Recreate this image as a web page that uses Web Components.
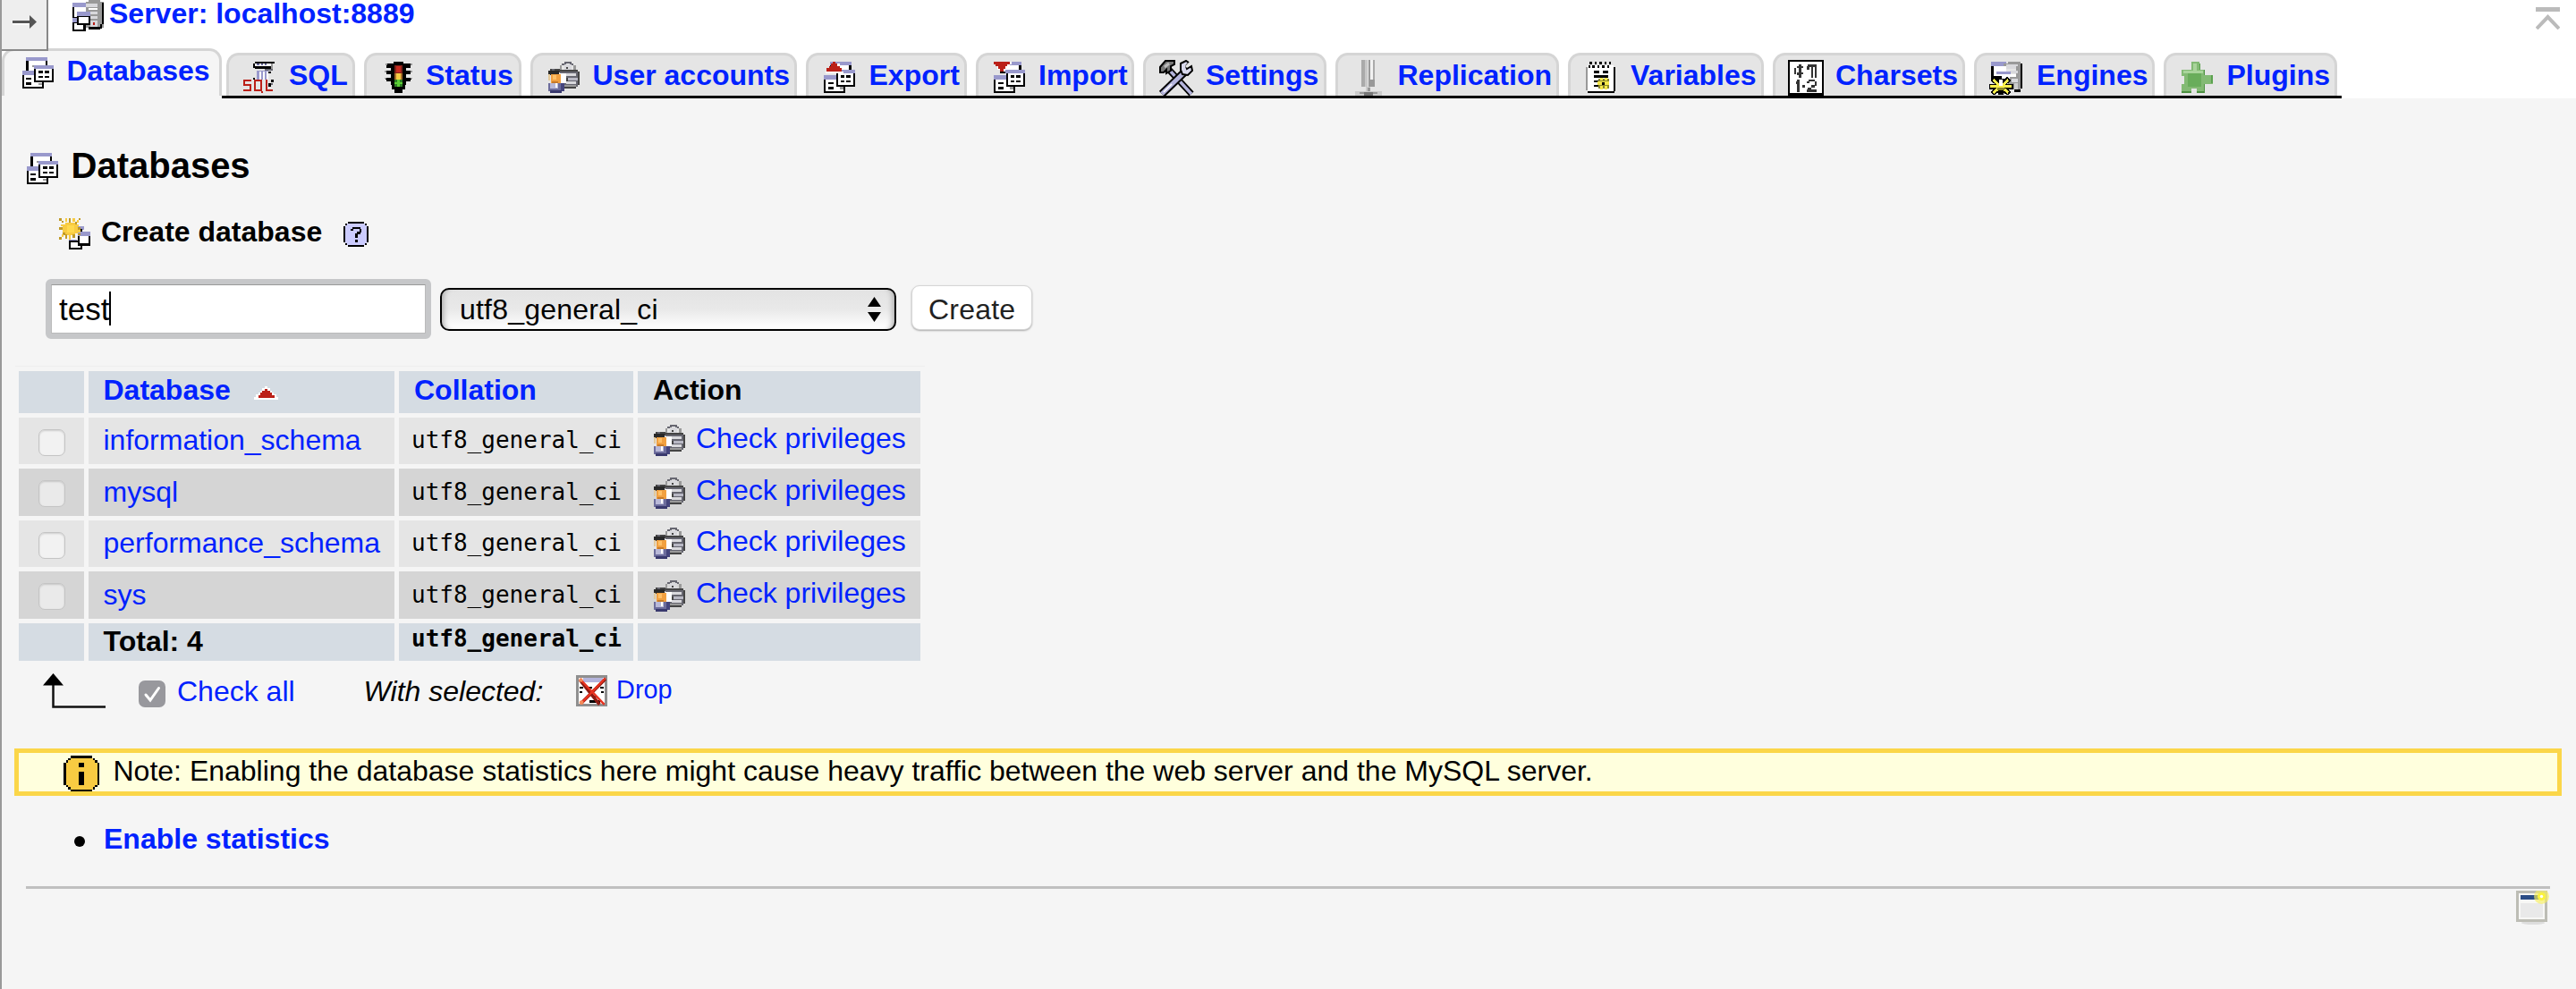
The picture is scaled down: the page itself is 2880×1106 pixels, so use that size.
<!DOCTYPE html>
<html lang="en">
<head>
<meta charset="utf-8">
<title>Databases</title>
<style>
html,body{margin:0;height:100%;overflow:hidden}
body{background:#f5f5f5;font:32px/36px "Liberation Sans",Arial,sans-serif;color:#000;white-space:nowrap}
</style>
</head>
<body>
<pma-page></pma-page>
<script>
const P={K:'#000',W:'#fff',L:'#9999cc',G:'#999',D:'#444',S:'#d8d8dc',R:'#bb2018',Y:'#f5e84a',O:'#f2a040',V:'#6c6c9c',A:'#b9b9d8',M:'#666670',N:'#c09a28',E:'#f8cb42',Q:'#fff9a0'};
// Each icon: view box size, then "colour x y w h" rectangles.
const DB='L 2 0 11 2;K 2 2 11 8;W 3 2 9 7;G 5 4 4 1;L 0 7 7 2;K 0 9 11 7;W 1 9 9 6;K 2 10.5 2.4 1;K 2 13 2.4 1;G 8 13.2 2 1;L 6 4 10 2;K 6 6 10 7;W 7 6 8 6;K 8 7 2.4 1.1;K 11.3 7 2.4 1.1;K 8 9.4 2.4 1.1;K 11.3 9.4 2.4 1.1';
const DBX='L 3 0 11 2;K 3 2 11 4;W 4 2 9 3;L 0 7 7 2;K 0 9 11 7;W 1 9 9 6;K 2.5 10.5 2.4 1;K 2.5 13 2.4 1;G 8 13 2 1;L 6 4 10 2;K 6.5 6 9.5 7;W 7.5 6 7.5 6;K 8.5 7 2 1.1;K 11.5 7 2 1.1;K 8.5 9.4 2 1.1;K 11.5 9.4 2 1.1;';
const ICON={
db:DB,
host:'L 0 1.3 7 2.2;K 0 3.5 10 6;W 1 3.5 8 5;G 8 0 6 1;G 7 1 9 13;S 7 2 6 1.6;W 8 4 5 1;S 9 6 4 1.4;S 9 8.4 4 1;#d8d8dc 9 10.5 4 3;K 8 13.6 6 1.4;K 14 12.5 1 2;K 15 1.5 1 11;R 10.6 11.4 1 1.4;L 0 9.2 3 2;L 2.3 6 6.8 2;K 0 11.2 6.7 4.8;W 1 12 4.7 3;K 2.3 8 6.7 4.8;W 3.3 8.5 4.7 3.3',
sql:'K 6 0 10 1;K 5 1 1 2;W 6 1 8 1.5;V 7 1 1 1;V 9 1 1 1;V 11 1 1 1;K 6 2.5 9 1;G 14 1 1.3 3;M 11 3.5 4 1;L 7 4.5 6 4.5;W 8 5 1 4;W 10 5 1 4;W 12 5 1 4;K 5 8 1 1;K 13 5 1 1;K 14 9 1.4 1.4;K 13 11 1 2;M 14 11 1 1;R 0 9 4 1;R 0 9 1 3;R 0 11.5 4 1;R 3 11.5 1 3.5;R 0 14 4 1;R 5.5 9 4 1;R 5.5 9 1 6;R 8.5 9 1 6;R 5.5 14 4 1;R 9 15 1 1;R 11.5 9 1 6;R 11.5 14 3.5 1',
status:'K 5.5 0 5 1;K 4 1 8 11;K 4.7 12 6.6 2;K 6 14 4 2;K 1.2 1 3 1;G 1.2 1 1 .8;K 2 2 2 1;K 1.5 4.5 2.5 1;G 1 4.5 1 .8;K 2 5.5 2 1;K 1.5 8 2.5 1;G 1 8 1 .8;K 2 9 2 1;K 12 1 3 1;G 14.3 1 1 .8;K 12 2 2 1;K 12 4.5 2.5 1;G 14.3 4.5 1 .8;K 12 5.5 2 1;K 12 8 2.5 1;G 14.3 8 1 .8;K 12 9 2 1;#802018 6 2 4 4;#c92b20 7 2.3 2 3;#a86d28 6 6 4 3;E 7 6 2 3;#2e7d25 6 9 4 4;#5ccf35 7.4 9 1.2 4;#5ccf35 6 10.4 4 1.2',
users:'M 8 0 4 1;M 7 1 2 1;M 11 1 2 1;G 6 2 1 2;G 13 2 1 2;S 8 1.5 4 2.5;D 9 2.6 1.2 1.2;D 6 4 9 1;D 15 5 1 7;M 6 5 9 8;W 6 6 3 5;S 9 6 5 1.3;#b8b8c4 9 8 6 1.4;S 9 10 5 1.5;D 9 8 1.2 2;D 7 12.5 7 1;G 8 11.8 6 .8;D 1 3.6 5 2;#292929 0 4.5 5.5 2.5;M 2 3.7 1 1;#e3c99a 0 6.5 1 3;O 1.2 6.4 5 4.4;#ffc067 2.2 7 2 2;#c77a28 2 10 3 1;V 0 11 8 4;A 1 11 2 2.5;#44447c 6.5 11 1.5 4;A 3 10.8 2 3;W 3.7 11 1 2.4;#39396e 1 14.6 6 1.4',
exp:DBX+'W 1 5 9 1;#fff 3 3 6 2;#fff 4 1 4 2;R 4.6 0 1.4 1;R 3.8 1 3 1.4;R 2.7 2.3 5.4 1.2;R 1.5 3.4 7.7 1.4',
imp:DBX+'#fff 0 0 9 1.4;#fff 2 1 6 3;R 0 0 8 1.3;R 1 1.3 6 1.2;R 2.2 2.5 3.8 1.3;R 3.2 3.8 1.8 1',
vars:'G 0 2.6 1 12;K 14 2.6 1.3 12.6;K 1 15 13.5 1;W 1 2 13 13;K 2 0 1 1.3;K 4.5 0 1 1.3;K 7 0 1 1.3;K 9.5 0 1 1.3;K 12 0 1 1.3;K 1.5 2 1 1.3;K 3.4 1.8 1 1.5;K 6 1.8 1 1.5;K 8.4 1.8 1 1.5;K 11 1.8 1 1.5;K 4 4.6 3 1.2;K 8.5 4.6 3 1.2;K 4 7 7.5 1.2;K 4 9.4 2.8 1.2;K 4 11.8 2.2 1.2;#8b882a 6.3 8.5 5.5 5.4;Y 7.3 8.3 1.4 1.4;Y 9.5 8.3 1.4 1.4;Y 6 10 6 2;Y 7.3 12.5 1.4 1.6;Y 9.5 12.5 1.4 1.6;K 8.4 10.4 1.4 1.4',
chars:'K 0 0 18 18;W 1 1 16 15.5;#333 3.2 4 1 3;#333 4.5 3 1 1.2;#333 5.4 2.2 1.2 6.8;#333 6.5 3 1 1;#333 4.4 6.5 1 1.2;#333 6.5 6.3 1 1;#333 9.7 2.4 4.5 1;#333 9.6 3 1.4 2;#333 11.6 2.4 1 6.4;#333 13.4 2.4 1 6.4;#333 4.7 10 1.3 6;#333 4 11 1 1;#333 7.4 12.8 1.2 1.2;#333 9.6 10.6 1 1;#333 10.3 10 3 1;#333 13.3 11 1 2;#333 11.5 12.8 2 1;#333 10 14 1.7 1;#333 9.4 15 5 1',
eng:'K 1 2 7 7;W 2 2 6 5;L 1 0 7 2;G 9 0 6 1.3;K 15 1 1 12;G 7 1 8 1;S 8 1.5 6 2;G 13 2 2 12;S 10 4.5 4 1.3;G 9 6 5 7.5;W 9 6.2 4 1;S 11 8.4 3 1.4;#ccc 12 10.5 2 3;L 3.5 4.6 7 1.6;W 6 6 4 2;K 12 13.5 3 1.4',
plug:'#83ba74 5 0 4.3 4;#5ba14f 9 1 .6 3;#83ba74 0 4 12 12;#a9d49b .8 4.5 10 1.4;#69ad5b 3 6 7 7;#83ba74 12 7 4 4.6;#5ba14f 15 7 1 4;#4d9141 11.2 4 .8 3;#4d9141 11.2 11.5 .8 4.5;#4d9141 0 15 12 1;#e5e5e5 0 7.4 1.5 4;#e5e5e5 5 13.5 2.7 2.5;#a9d49b 5.8 .7 2 4',
create:'L 6 4 7 2;K 11 5.5 1 2;L 5 11 4 1.5;K 5 11.5 7 4.5;W 6 12.5 5 2.5;L 9.5 7 6.5 2;K 9.5 9 6.5 5;W 10.5 9 4.5 4;N 0 0 1.2 1.2;N 1.3 1.3 1.2 1.2;E 3 0 1 2;N 5 0 1 3;E 7 0 1 2;E 9 1 1.2 1.2;N 10 0 1 1;N 0 4.6 11 1.3;E 1 3.3 9 1;E 3 2.3 5 6.5;E 2 3.3 7.4 4.4;N 8 2 1 1;N 2 7.5 1 1;E 1.2 8.4 1.2 1.2;N 0 9.6 1.2 1.2;N 3 8.3 1 2;E 5 8 1 3;N 7 8 1 2;E 9 6 2 1.5;N 9.5 7.6 1.3 1.2;#ffd94e 4 3.8 3.6 3.5',
drop:'#8f8f8f 0 0 16 16;W 1.5 1.5 13 13;#b4b4dc 3.5 1.2 10 2.4;K 2 6 1.5 1;K 12.5 6 1.5 1;K 2 8.3 1 1;K 13 8.3 1 1;K 6.3 6 2 1;K 8 10.5 3 1;K 7 13 5.5 1',
help:'K 2.3 0 8.4 1;K 2.3 12 8.4 1;K 0 2.2 1 8.6;K 12 2.2 1 8.6;K 1 1 1.3 1.3;K 10.7 1 1.3 1.3;K 1 10.7 1.3 1.3;K 10.7 10.7 1.3 1.3;#ccccff 2 1 9 11;#ccccff 1 2 11 9;K 4.6 2.7 4.2 1;K 3.7 3.5 1.2 1.2;K 8.2 3.5 1.2 2;K 7 5.3 1.6 1;K 6 6.2 1.2 2;K 6 9.4 1.2 1.2',
info:'K 3.3 0 9.4 1;K 3.3 15 9.4 1;K 0 3 1 10;K 15 3 1 10;K 2 1 2 1;K 1 2 1 1.4;K 12 1 2 1;K 14 2 1 1.4;K 1 12.6 1 1.4;K 2 14 2 1;K 14 12.6 1 1.4;K 12 14 2 1;#f8cb42 3 1 10 14;#f8cb42 1 3 14 10;#f8cb42 2 2 12 12;K 6.8 3 2.2 2;K 6.8 7 2.2 6',
sort:'#fff 5.3 0 1.4 1.2;#fff 4.2 1 3.6 1.2;#fff 3.2 2 5.6 1.2;#fff 2.2 3 7.6 1.2;#fff 1.1 4 9.8 1.2;#fff 0 5.4 12 1.2;R 5.3 1.2 1.4 1;R 4.2 2.2 3.6 1;R 3 3.2 6 1.2;R 2 4.4 8 1.4'
};
const BOX={chars:'0 0 18 18',help:'0 0 13 13',sort:'0 0 12 6.6'};
const EXTRA={
eng:'<path d="M5.600 11.500 1.500 8.200M5.600 11.500 9.700 8.200M5.600 12H0M5.600 12H11.500M5.600 12 1.500 15.500M5.600 12 9.700 15.500M5.600 12V16.500" stroke="#000" stroke-width="2.600" fill="none"/><path d="M5 11.500 2 8.800M6.200 11.500 9.200 8.800M5.600 12H.5M5.600 12H11M5 12.500 2 15M6.200 12.500 9.200 15" stroke="#f8ee4a" stroke-width="1.300" fill="none"/><path d="M4.800 8.500h1.600v3H4.800z" fill="#fff"/><path d="M4 12.600h3.200v1.200H4z" fill="#8b882a"/>',
drop:'<g shape-rendering="auto" fill="none"><path d="M2 2.5 12 15M15 2 2.5 14.5" stroke="#8d1a12" stroke-width="1.6"/><path d="M2 2 14.5 15M15 1.5 3 14" stroke="#e8321f" stroke-width="1.1"/><circle cx="2.5" cy="2.5" r="1" fill="#f58a5a"/><circle cx="2.8" cy="14" r="1.1" fill="#f58a5a"/></g>'};
const RAW={
tools:'<svg viewBox="0 0 40 40" fill="none"><path d="M11 11 36 38" stroke="#000" stroke-width="7"/><path d="M12 12 36 38" stroke="#b4b4dc" stroke-width="3.4"/><path d="M30 12 3 38" stroke="#000" stroke-width="9"/><path d="M30 12 3 38" stroke="#b4b4dc" stroke-width="5"/><path d="M14 27 5 36" stroke="#fff" stroke-width="1.6"/><path d="M1 8 7 1H17V5L13 7V12L8 15V11L5 14H1Z" fill="#777" stroke="#000" stroke-width="2"/><path d="M6 8 11 4" stroke="#bbb" stroke-width="3"/><path d="M24 4 30 1 33 3 30 7 31 10 36 7 37 12 32 17 26 16 24 11Z" fill="#d8d8ec" stroke="#000" stroke-width="2"/><path d="M30 8 36 2" stroke="#e5e5e5" stroke-width="3"/></svg>',
repl:'<svg viewBox="0 0 30 40" shape-rendering="crispEdges"><path fill="#aaa" d="M7 0h4v30H7z"/><path fill="#c8c8c8" d="M11 0h3v30h-3z"/><path fill="#999" d="M15 0h2v30h-2z"/><path fill="#f2f2f2" d="M17 0h3v22h-3z"/><path fill="#aaa" d="M20 0h2v30h-2z"/><path fill="#999" d="M15 22h7v8h-7z"/><path fill="#ccc" d="M12 30h5v5h-5zM0 35h30v5H0z"/><path fill="#999" d="M14 31h3v4h-3zM5 36h20v2H5z"/><path fill="#777" d="M10 36h10v4H10z"/></svg>',
win:'<svg viewBox="0 0 38 39"><ellipse cx="19" cy="36" rx="13" ry="2" fill="#ddd"/><rect x="1.5" y="1.5" width="32" height="32" fill="#f7f7f5" stroke="#bdbdb5" stroke-width="3"/><rect x="5" y="5" width="25" height="5" fill="#2b4d86"/><rect x="5" y="14" width="25" height="16" fill="#e9e9e9"/><circle cx="28.500" cy="6.500" r="8.500" fill="#f8f060" opacity=".65"/><circle cx="28.500" cy="6.500" r="4.500" fill="#fbf33c"/><circle cx="28.500" cy="6.500" r="1.700" fill="#fff"/></svg>'};
function def(name,html){
  customElements.define(name,class extends HTMLElement{
    constructor(){super();this.attachShadow({mode:'open'})}
    connectedCallback(){this.shadowRoot.innerHTML=typeof html==='function'?html(this):html}
  });
}
const I=(n,w,h,x=0,y=0)=>`<px-icon name="${n}" style="width:${w}px;height:${h||w}px;margin:${y}px 0 0 ${x}px"></px-icon>`;
def('px-icon',el=>{
  const n=el.getAttribute('name');
  let s=RAW[n];
  if(!s){
    const r=ICON[n].split(';').filter(Boolean).map(t=>{const[c,x,y,w,h]=t.split(' ');return `<rect x="${x}" y="${y}" width="${w}" height="${h}" fill="${P[c]||c}"/>`}).join('');
    s=`<svg viewBox="${BOX[n]||'0 0 16 16'}" shape-rendering="crispEdges" preserveAspectRatio="none">${r}${EXTRA[n]||''}</svg>`;
  }
  return `<style>:host{display:block;flex:none}svg{display:block;width:100%;height:100%}</style>${s}`;
});
def('nav-tab',`<style>:host{display:flex;align-items:flex-start;box-sizing:border-box;height:48px;flex:none;border:3px solid #d5d5d5;border-bottom:0;border-radius:14px 14px 0 0;background:#e5e5e5;overflow:hidden;font-weight:bold;color:#0022ff}
:host([active]){height:53px;background:#f5f5f5}
.t{padding-top:4px}</style><slot name="icon"></slot><div class="t"><slot></slot></div>`);
// label, left, right, icon, icon x, icon y, icon width, icon height, text x
const TABS=[['Databases',2,248,'db',25,7,35,35,74.5],['SQL',253,397,'sql',272,7,35,35,323],['Status',407,583,'status',428,7,35,35,476],['User accounts',593,891,'users',613,7,35,35,662.5],['Export',901,1081,'exp',921,7,35,35,971.5],['Import',1091,1268,'imp',1111,7,35,35,1161],['Settings',1278,1483,'tools',1296,5,40,40,1348],['Replication',1493,1743,'repl',1515,5,30,40,1562.5],['Variables',1753,1972,'vars',1773,7,35,35,1823],['Charsets',1982,2197,'chars',1999,5,40,40,2052],['Engines',2207,2409,'eng',2224,7,37,37,2277],['Plugins',2419,2613,'plug',2439,7,35,35,2489.5]];
def('top-menu',`<style>:host{display:flex;flex-direction:column;height:110px;background:#fff;position:relative}
.server{display:flex;height:54px;font-weight:bold;color:#0022ff;align-items:flex-start;padding-left:79px}
.server span{margin:-3px 0 0 6px}.server .up{margin:8px 18px 0 auto;width:27px;height:25px}
.bar{display:flex;align-items:flex-end;height:53px}
nav-tab+nav-tab{margin-left:10px}nav-tab:nth-child(2){margin-left:5px}
.line{display:flex;height:3px}.line i{width:246px;background:#f5f5f5}.line b{width:2370px;background:#000}
.panel{position:absolute;left:0;top:0;width:50px;height:55px;background:#eee;border:solid #888;border-width:0 2px 2px 0}
.panel svg{display:block;margin:17px 0 0 12px}</style>
<div class="server">${I('host',35)}<span>Server: localhost:8889</span><svg class="up" viewBox="0 0 27 25" fill="none" stroke="#bbb"><path d="M0 2.500H27" stroke-width="5"/><path d="M1 24 13.500 11 26 24" stroke-width="4"/></svg></div>
<div class="bar">${TABS.map((t,i)=>`<nav-tab ${i?'':'active'} style="width:${t[2]-t[1]}px"><px-icon slot="icon" name="${t[3]}" style="width:${t[6]}px;height:${t[7]}px;margin:${t[5]}px ${t[8]-t[4]-t[6]}px 0 ${t[4]-t[1]-3}px"></px-icon>${t[0]}</nav-tab>`).join('')}</div>
<div class="line"><i></i><b></b></div>
<div class="panel"><svg width="27" height="18" viewBox="0 0 27 18"><path d="M0 8.500h20V11H0z" fill="#fff"/><path d="M0 6h19V0l8 7.500-8 7.500V9H0z" fill="#555"/></svg></div>`);
def('check-box',`<style>:host{display:block;flex:none;box-sizing:border-box;width:30px;height:30px;border-radius:7px;border:1px solid #c4c4c4;background:rgba(255,255,255,.5);box-shadow:inset 0 1px 2px rgba(0,0,0,.15)}
:host([checked]){background:#98989d;border:0;box-shadow:none}svg{display:none}:host([checked]) svg{display:block}</style><svg viewBox="0 0 30 30"><path d="M8 16 13 22 22.500 8.500" fill="none" stroke="#fff" stroke-width="3" stroke-linecap="round"/></svg>`);
def('create-form',`<style>:host{display:flex;align-items:flex-start;padding:33px 0 0 49px;height:67px}
.in{display:flex;box-sizing:border-box;width:431px;height:67px;border:6px solid #c6c7c9;border-radius:6px;background:#c6c7c9}
.in div{flex:1;display:flex;background:#fff;border:1px solid #bbb;border-top-color:#999;font-size:35px;padding:9px 0 0 8px}.in i{width:2px;height:38px;background:#000;margin-top:-2px}
.sel{display:flex;box-sizing:border-box;width:510px;height:48px;margin:10px 0 0 10px;border:2px solid #000;border-radius:10px;background:linear-gradient(#e3e3e3,#e9e9e9 50%,#fff);box-shadow:inset 7px 0 6px -5px #aaa,inset -7px 0 6px -5px #aaa;padding:4px 15px 0 20px;justify-content:space-between;letter-spacing:.2px}
.sel svg{margin-top:4px}
.btn{box-sizing:border-box;width:135px;height:50px;margin:7px 0 0 17px;border:1px solid #d5d5d5;border-radius:9px;background:#fff;box-shadow:0 1px 2px #aaa;color:#222;padding:8px 0 0 18px;letter-spacing:.2px}</style>
<div class="in"><div>test<i></i></div></div><div class="sel">utf8_general_ci<svg width="15" height="28" viewBox="0 0 15 28"><path d="M0 11 7.500 0 15 11zM0 17H15L7.500 28z"/></svg></div><div class="btn">Create</div>`);
def('db-row',`<style>:host{display:grid;grid-template-columns:73px 342px 262px 316px;column-gap:5px;background:none}
:host>div,.a,.b,.c,.d{background:var(--c);display:flex;align-items:flex-start;box-sizing:border-box;overflow:hidden}
.a{padding:13px 0 0 22px}.b{padding:var(--t,7px) 0 0 16.5px;color:#0022ff}.c{padding:var(--m,6px) 0 0 14px;font:26px/36px "DejaVu Sans Mono",monospace}.d{padding:var(--d,5px) 0 0 18px;color:#0022ff}
:host([head]),:host([foot]){font-weight:bold}:host([head]) .c{font:bold 32px/36px "Liberation Sans",sans-serif;color:#0022ff;padding:3px 0 0 17px}:host([head]) .d{color:#000;padding:3px 0 0 17px}
:host([foot]) .b{color:#000}:host([foot]) .c{font-weight:bold;line-height:34px}</style>
<div class="a"><slot name="a"></slot></div><div class="b"><slot></slot></div><div class="c"><slot name="c"></slot></div><div class="d"><slot name="d"></slot></div>`);
def('db-table',`<style>:host{display:flex;flex-direction:column;gap:5px;margin:30px 0 0 15px;width:1017px;padding:5px 0 0 4px;box-sizing:border-box;border-top:1px solid #eee}</style>
<db-row head style="--c:#d5dce3;--t:3px;height:47px">Database<px-icon name="sort" style="width:27px;height:15px;margin:14px 0 0 26px"></px-icon><span slot="c">Collation</span><span slot="d">Action</span></db-row>
${[['information_schema',52],['mysql',53],['performance_schema',52],['sys',53]].map((r,i)=>`<db-row style="--c:${i%2?'#d5d5d5':'#e5e5e5'};--t:${i%2?8:7}px;--d:${i%2?6:5}px;--m:${i%2?8:7}px;height:${r[1]}px"><check-box slot="a"></check-box>${r[0]}<span slot="c">utf8_general_ci</span><px-icon slot="d" name="users" style="width:35px;height:35px;margin:${i%2?4:3}px 12px 0 0"></px-icon><span slot="d">Check privileges</span></db-row>`).join('')}
<db-row foot style="--c:#d5dce3;--t:2px;--m:0px;height:42px">Total: 4<span slot="c">utf8_general_ci</span></db-row>`);
def('bulk-actions',`<style>:host{display:flex;align-items:flex-start;height:98px}.l{color:#0022ff}
check-box{margin:22px 13px 0 37px}</style>
<svg width="70" height="40" viewBox="0 0 70 40" style="margin:14px 0 0 46px"><path d="M11.500 10V37.500H70" fill="none" stroke="#111" stroke-width="2.500"/><path d="M0 13.500 11.500 0 23 13.500z"/></svg>
<check-box checked></check-box><span class="l" style="margin-top:16px">Check all</span><i style="margin:16px 0 0 77px;width:237px">With selected:</i>${I('drop',35,35,0,16)}<span class="l" style="font-size:28.8px;margin:14px 0 0 10.5px">Drop</span>`);
def('notice-box',`<style>:host{display:flex;align-items:flex-start;box-sizing:border-box;height:53px;border:5px solid #fbd649;background:#ffffdd;margin:0 16px 0 14px}span{margin:2px 0 0 15.5px}</style>${I('info',40,40,50,3)}<span><slot></slot></span>`);
def('pma-page',`<style>:host{display:block;box-sizing:border-box;height:1106px;border-left:2px solid #999}
h2,h3{display:flex;align-items:flex-start;margin:0;font-weight:bold}h2{font-size:40px;padding:57px 0 0 28px;height:73px}h2 span{margin:0 0 0 14.5px}
h3{font-size:32px;height:39px}.dot{width:12px;height:12px;border-radius:50%;background:#000;margin:15px 21px 0 81px}
.stat{display:flex;height:71px;padding-top:30px;font-weight:bold;color:#0022ff}hr{border:0;height:3px;background:#c0c0c0;margin:0 29px 0 27px}
.foot{display:flex;justify-content:flex-end;padding:2px 29px 0 0}</style>
<top-menu></top-menu>
<h2>${I('db',35,35,0,4)}<span>Databases</span></h2>
<h3>${I('create',35,35,64,4)}<span style="margin:1px 0 0 12px">Create database</span>${I('help',28,28,24,8)}</h3>
<create-form></create-form>
<db-table></db-table>
<bulk-actions></bulk-actions>
<notice-box>Note: Enabling the database statistics here might cause heavy traffic between the web server and the MySQL server.</notice-box>
<div class="stat"><div class="dot"></div>Enable statistics</div>
<hr><div class="foot">${I('win',38,39)}</div>`);
</script>
</body>
</html>
